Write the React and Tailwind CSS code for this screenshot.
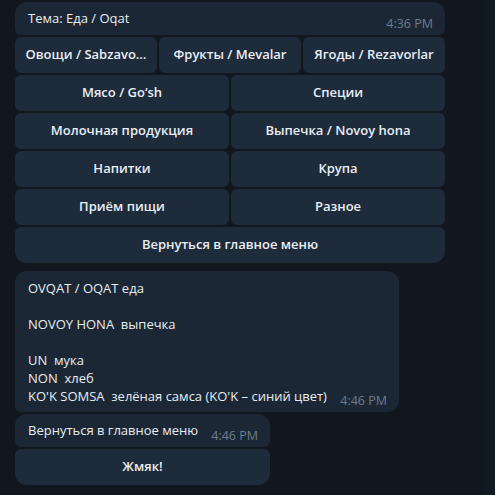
import React from 'react';

const keyboard = [
  ['Овощи / Sabzavo…', 'Фрукты / Mevalar', 'Ягоды / Rezavorlar'],
  ['Мясо / Go‘sh', 'Специи'],
  ['Молочная продукция', 'Выпечка / Novoy hona'],
  ['Напитки', 'Крупа'],
  ['Приём пищи', 'Разное'],
];

const Key = ({ label, className = '' }) => (
  <button className={`flex-1 min-w-0 h-[36px] bg-[#1e2b3a] rounded-[6px] text-[13px] font-semibold text-[#e9eef4] truncate px-2 ${className}`}>
    {label}
  </button>
);

const Time = ({ children, className = 'translate-y-[5px]' }) => (
  <span className={`text-[12.5px] text-[#6c7d8e] ml-3 shrink-0 ${className}`}>{children}</span>
);

const App = () => {
  return (
    <div
      className="w-[495px] h-[495px] bg-[#10171f] flex overflow-hidden"
      style={{ fontFamily: '"Open Sans", "Noto Sans", sans-serif' }}
    >
      <div className="flex-1 pl-[15px] pt-[2px]">
        <div className="w-[430px] flex flex-col gap-[2px]">
          <div className="bg-[#1c2735] rounded-t-[12px] rounded-b-[6px] h-[33px] flex items-start justify-between pl-[13px] pr-[12px] pt-[8px]">
            <span className="text-[13px] text-[#e6edf3] leading-[17px]">Тема: Еда / Oqat</span>
            <Time>4:36 PM</Time>
          </div>
          {keyboard.map((row, i) => (
            <div key={i} className="flex gap-[2px]">
              {row.map((k) => (
                <Key key={k} label={k} />
              ))}
            </div>
          ))}
          <div className="flex">
            <Key label="Вернуться в главное меню" className="rounded-b-[12px]" />
          </div>
        </div>

        <div className="mt-[8px] w-[384px] bg-[#1c2735] rounded-t-[12px] rounded-bl-[6px] rounded-br-[12px] pl-[13px] pr-[12px] pt-[8px] pb-[7px] flex items-end justify-between">
          <div className="text-[13px] text-[#e6edf3] leading-[18px] whitespace-pre">
            {'OVQAT / OQAT еда\n\nNOVOY HONA  выпечка\n\nUN  мука\nNON  хлеб\nKO\'K SOMSA  зелёная самса (KO\'K – синий цвет)'}
          </div>
          <Time className="translate-y-[6px]">4:46 PM</Time>
        </div>

        <div className="mt-[2px] w-[255px] flex flex-col gap-[2px]">
          <div className="bg-[#1c2735] rounded-t-[12px] rounded-b-[6px] h-[33px] flex items-start justify-between pl-[13px] pr-[12px] pt-[8px]">
            <span className="text-[13px] text-[#e6edf3] leading-[17px]">Вернуться в главное меню</span>
            <Time>4:46 PM</Time>
          </div>
          <div className="flex">
            <Key label="Жмяк!" className="rounded-b-[12px]" />
          </div>
        </div>
      </div>
      <div className="w-[11px] bg-[#111923]" />
    </div>
  );
};

export default App;
